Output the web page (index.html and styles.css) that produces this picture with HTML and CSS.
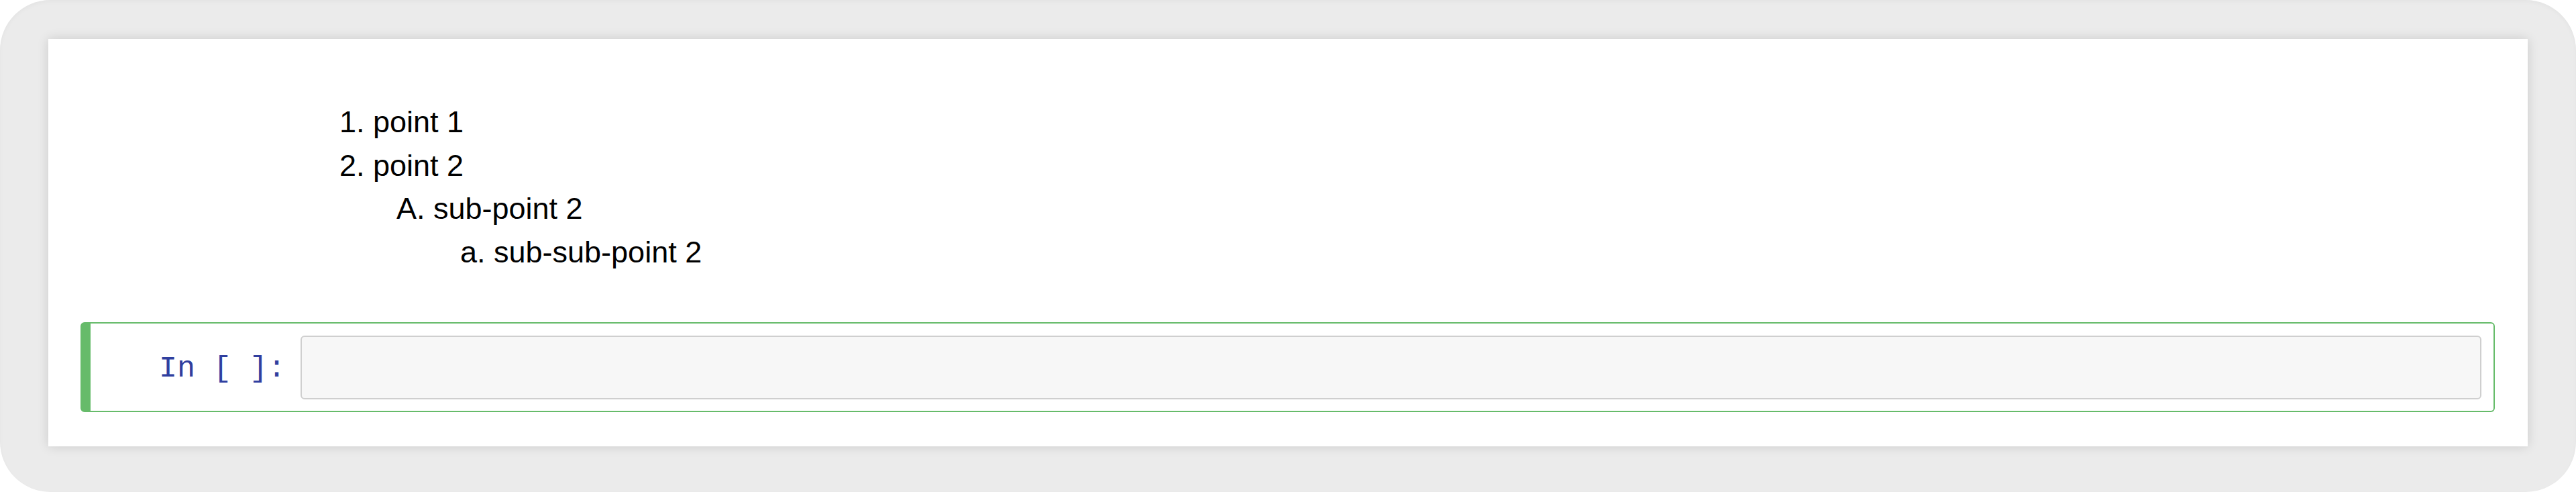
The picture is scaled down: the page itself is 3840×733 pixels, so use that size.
FILE: index.html
```html
<!DOCTYPE html>
<html>
<head>
<meta charset="utf-8">
<link rel="stylesheet" href="styles.css">
</head>
<body>
<div class="frame">
  <div class="panel">
    <div class="md-cell">
      <div class="prompt-spacer"></div>
      <ol class="lvl1">
        <li>point 1</li>
        <li>point 2
          <ol class="lvl2">
            <li>sub-point 2
              <ol class="lvl3">
                <li>sub-sub-point 2</li>
              </ol>
            </li>
          </ol>
        </li>
      </ol>
    </div>
    <div class="code-cell">
      <div class="prompt">In&nbsp;[&nbsp;]:</div>
      <div class="input"></div>
    </div>
  </div>
</div>
</body>
</html>
```

FILE: styles.css
```css
html, body {
  margin: 0;
  padding: 0;
  background: #ffffff;
}

.frame {
  box-sizing: border-box;
  height: 733px;
  border-radius: 75px;
  background: #ebebeb;
  box-shadow: inset 0 3px 6px rgba(0, 0, 0, 0.03);
  padding: 58px 72px 68px 72px;
  display: flex;
}

.panel {
  flex: 1;
  background: #ffffff;
  box-shadow: 0 0 16px rgba(0, 0, 0, 0.14);
  padding: 0 49px 51px 48px;
  display: flex;
  flex-direction: column;
}

.md-cell {
  display: flex;
  padding-top: 92px;
  padding-left: 15px;
}

.prompt-spacer {
  width: 313px;
  flex: none;
}

.md-cell ol {
  margin: 0;
  font-family: "Liberation Sans", Arial, Helvetica, sans-serif;
  font-size: 45px;
  line-height: 64.5px;
  color: #000;
}

.lvl1 {
  padding-left: 108px;
  list-style-type: decimal;
}

.lvl2 {
  padding-left: 90px;
  list-style-type: upper-alpha;
}

.lvl3 {
  padding-left: 90px;
  list-style-type: lower-alpha;
}

.code-cell {
  margin-top: 72px;
  display: flex;
  border: 2px solid #66bb6a;
  border-left-width: 15px;
  border-radius: 6px;
  padding: 18px 18px 17px 0;
}

.prompt {
  box-sizing: border-box;
  width: 313px;
  flex: none;
  text-align: right;
  padding-right: 22px;
  padding-top: 4px;
  font-family: "Liberation Mono", "Courier New", monospace;
  font-size: 45px;
  line-height: 91px;
  color: #303f9f;
}

.input {
  flex: 1;
  box-sizing: border-box;
  height: 95px;
  background: #f7f7f7;
  border: 2px solid #cfcfcf;
  border-radius: 6px;
}
```
